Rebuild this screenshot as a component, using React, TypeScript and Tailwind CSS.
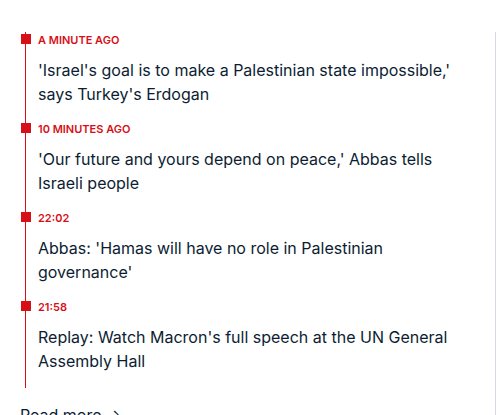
import React from 'react';

interface Entry {
  time: string;
  title: string;
}

const entries: Entry[] = [
  { time: 'A MINUTE AGO', title: "'Israel's goal is to make a Palestinian state impossible,' says Turkey's Erdogan" },
  { time: '10 MINUTES AGO', title: "'Our future and yours depend on peace,' Abbas tells Israeli people" },
  { time: '22:02', title: "Abbas: 'Hamas will have no role in Palestinian governance'" },
  { time: '21:58', title: "Replay: Watch Macron's full speech at the UN General Assembly Hall" },
];

export default function App() {
  return (
    <div className="flex h-[415px] w-[497px] overflow-hidden bg-white font-['Inter',sans-serif]">
      <div className="w-[495px] shrink-0">
        {/* Live timeline */}
        <ul className="ml-[25px] mt-[32px] border-l border-[#d70f17]">
          {entries.map((e) => (
            <li key={e.time} className="relative pb-[15px] pl-[12px] pr-[30px]">
              <span className="absolute left-[-5px] top-[2px] h-[10px] w-[10px] bg-[#d70f17]" />
              <div className="text-[11px] font-semibold leading-[16px] text-[#d70f17]">{e.time}</div>
              <a href="#" className="mt-[10px] block text-[16px] leading-[24px] text-[#0c1d33]">
                {e.title}
              </a>
            </li>
          ))}
        </ul>
        <a href="#" className="mt-[15px] ml-[20px] block text-[16px] leading-[24px] text-[#0c1d33]">
          Read more →
        </a>
      </div>
      <div className="mt-[32px] flex-1 border-l border-[#d3dae3]" />
    </div>
  );
}
